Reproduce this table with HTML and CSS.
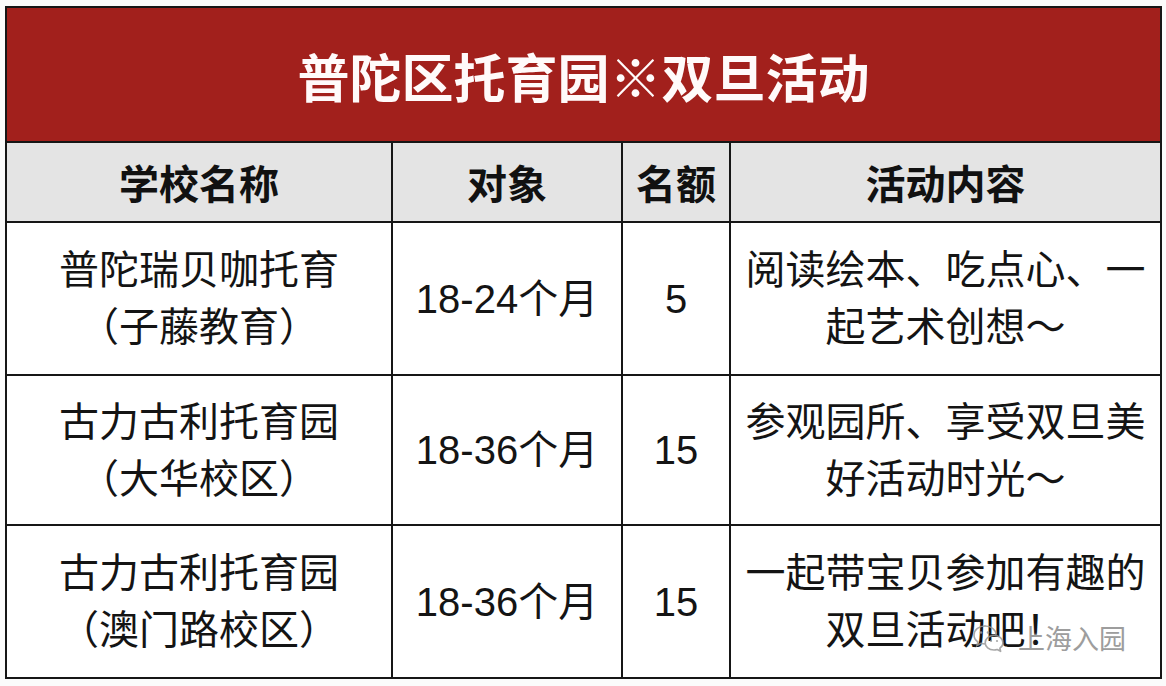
FILE: index.html
```html
<!DOCTYPE html>
<html lang="zh-CN">
<head>
<meta charset="utf-8">
<title>普陀区托育园※双旦活动</title>
<link rel="stylesheet" href="styles.css">
</head>
<body>
<div class="page">
  <div class="sheet">
    <div class="cell title">普陀区托育园※双旦活动</div>

    <div class="cell head">学校名称</div>
    <div class="cell head">对象</div>
    <div class="cell head">名额</div>
    <div class="cell head">活动内容</div>

    <div class="cell">普陀瑞贝咖托育<br>（子藤教育）</div>
    <div class="cell num">18-24个月</div>
    <div class="cell num">5</div>
    <div class="cell">阅读绘本、吃点心、一<br>起艺术创想～</div>

    <div class="cell">古力古利托育园<br>（大华校区）</div>
    <div class="cell num">18-36个月</div>
    <div class="cell num">15</div>
    <div class="cell">参观园所、享受双旦美<br>好活动时光～</div>

    <div class="cell">古力古利托育园<br>（澳门路校区）</div>
    <div class="cell num">18-36个月</div>
    <div class="cell num">15</div>
    <div class="cell">一起带宝贝参加有趣的<br>双旦活动吧！</div>
  </div>

  <div class="watermark">
    <svg class="wm-icon" width="34" height="30" viewBox="0 0 34 30" aria-hidden="true">
      <path d="M13 3 C6.5 3 2 7 2 12 C2 14.8 3.5 17.2 5.8 18.8 L5 22.5 L9 20.3 C10.3 20.7 11.6 20.9 13 20.9" fill="none" stroke="#9a9a9a" stroke-width="1.6" stroke-linecap="round"/>
      <path d="M13 3 C19.5 3 24 7 24 11.5" fill="none" stroke="#9a9a9a" stroke-width="1.6" stroke-linecap="round"/>
      <path d="M22 12.5 C16.8 12.5 13.2 15.8 13.2 19.8 C13.2 23.8 16.8 27 22 27 C23.1 27 24.2 26.8 25.2 26.5 L28.6 28.3 L27.9 25.2 C29.9 23.9 31 22 31 19.8 C31 15.8 27.2 12.5 22 12.5 Z" fill="none" stroke="#9a9a9a" stroke-width="1.6" stroke-linejoin="round"/>
      <circle cx="9" cy="9.5" r="1.3" fill="#9a9a9a"/>
      <circle cx="16" cy="9.5" r="1.3" fill="#9a9a9a"/>
      <circle cx="19" cy="18" r="1.1" fill="#9a9a9a"/>
      <circle cx="25" cy="18" r="1.1" fill="#9a9a9a"/>
    </svg>
    <span class="wm-text">上海入园</span>
  </div>
</div>
</body>
</html>
```

FILE: styles.css
```css
html, body {
  margin: 0;
  padding: 0;
  background: #ffffff;
}

.page {
  position: relative;
  width: 1166px;
  height: 686px;
  padding: 6px 0 0 5px;
  box-sizing: border-box;
  background: #fbfbfb;
}

.sheet {
  display: grid;
  grid-template-columns: 384px 228px 106px 429px;
  grid-template-rows: 133px 78px 151px 148px 151px;
  gap: 2px;
  padding: 2px;
  width: max-content;
  background: #161616;
  font-family: "Liberation Sans", "Noto Sans CJK SC", sans-serif;
  color: #141414;
}

.cell {
  background: #ffffff;
  display: flex;
  align-items: center;
  justify-content: center;
  text-align: center;
  font-size: 40px;
  line-height: 57px;
  padding-top: 1px;
  box-sizing: border-box;
}

.num {
  font-size: 40px;
}

.title {
  grid-column: 1 / 5;
  background: #a2201c;
  color: #fffafa;
  font-family: "Noto Sans CJK SC", sans-serif;
  font-weight: 700;
  font-size: 52px;
  letter-spacing: 0;
  padding-top: 2px;
}

.head {
  background: #e4e4e4;
  font-family: "Noto Sans CJK SC", sans-serif;
  font-weight: 700;
  font-size: 40px;
  color: #111111;
}

.watermark {
  position: absolute;
  left: 972px;
  top: 622px;
  display: flex;
  align-items: center;
  gap: 12px;
  opacity: 0.85;
}

.wm-icon {
  display: block;
}

.wm-text {
  font-family: "Noto Sans CJK SC", sans-serif;
  font-size: 27px;
  line-height: 32px;
  color: #8c8c8c;
  text-shadow: 0 0 3px #ffffff, 0 0 2px #ffffff;
}
```
